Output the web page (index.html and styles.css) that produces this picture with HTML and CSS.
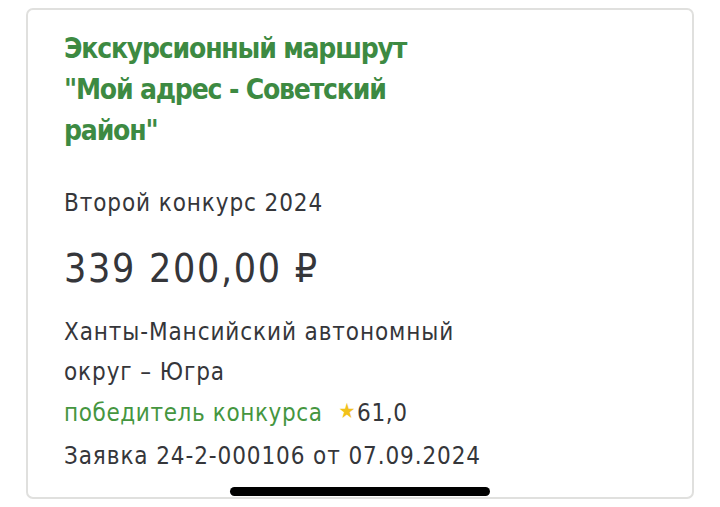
FILE: index.html
```html
<!DOCTYPE html>
<html lang="ru">
<head>
<meta charset="utf-8">
<link rel="stylesheet" href="styles.css">
</head>
<body>
<div class="card">
  <h1 class="title">Экскурсионный маршрут<br>"Мой адрес - Советский<br>район"</h1>
  <div class="contest">Второй конкурс 2024</div>
  <div class="amount">339 200,00 ₽</div>
  <div class="region">Ханты-Мансийский автономный<br>округ – Югра</div>
  <div class="status"><span class="winner">победитель конкурса</span><span class="score"><span class="star">★</span>61,0</span></div>
  <div class="app">Заявка 24-2-000106 от 07.09.2024</div>
</div>
<div class="home-indicator"></div>
</body>
</html>
```
FILE: styles.css
```css
html, body {
  margin: 0;
  padding: 0;
  background: #ffffff;
}
body {
  width: 720px;
  height: 507px;
  overflow: hidden;
  position: relative;
  font-family: "DejaVu Sans Condensed", "Noto Sans", sans-serif;
  color: #35363a;
}
.card {
  margin: 8px 0 0 26px;
  width: 668px;
  height: 491px;
  border: 2px solid #e0e0de;
  border-radius: 7px;
  padding: 18px 0 0 36px;
  box-sizing: border-box;
}
.title {
  margin: 0;
  font-size: 28px;
  line-height: 41px;
  font-weight: 700;
  letter-spacing: -1.2px;
  color: #3d8a42;
}
.contest {
  margin-top: 32px;
  font-size: 24px;
  line-height: 40px;
  letter-spacing: 0.9px;
}
.amount {
  margin-top: 22px;
  font-size: 39px;
  line-height: 48px;
  letter-spacing: 1.7px;
}
.region {
  margin-top: 19px;
  font-size: 24px;
  line-height: 40px;
  letter-spacing: 0.9px;
}
.status {
  margin-top: 1px;
  font-size: 24px;
  line-height: 40px;
  display: flex;
  align-items: baseline;
  gap: 16px;
}
.winner {
  color: #45963f;
  letter-spacing: 0.6px;
}
.score {
  letter-spacing: 0.6px;
}
.star {
  color: #f2c21b;
  font-size: 21px;
  margin-right: 1px;
  position: relative;
  top: -3px;
}
.app {
  margin-top: 2px;
  font-size: 24px;
  line-height: 40px;
  letter-spacing: 0.9px;
}
.home-indicator {
  position: absolute;
  left: 230px;
  top: 487px;
  width: 260px;
  height: 9px;
  border-radius: 5px;
  background: #000;
}
```
